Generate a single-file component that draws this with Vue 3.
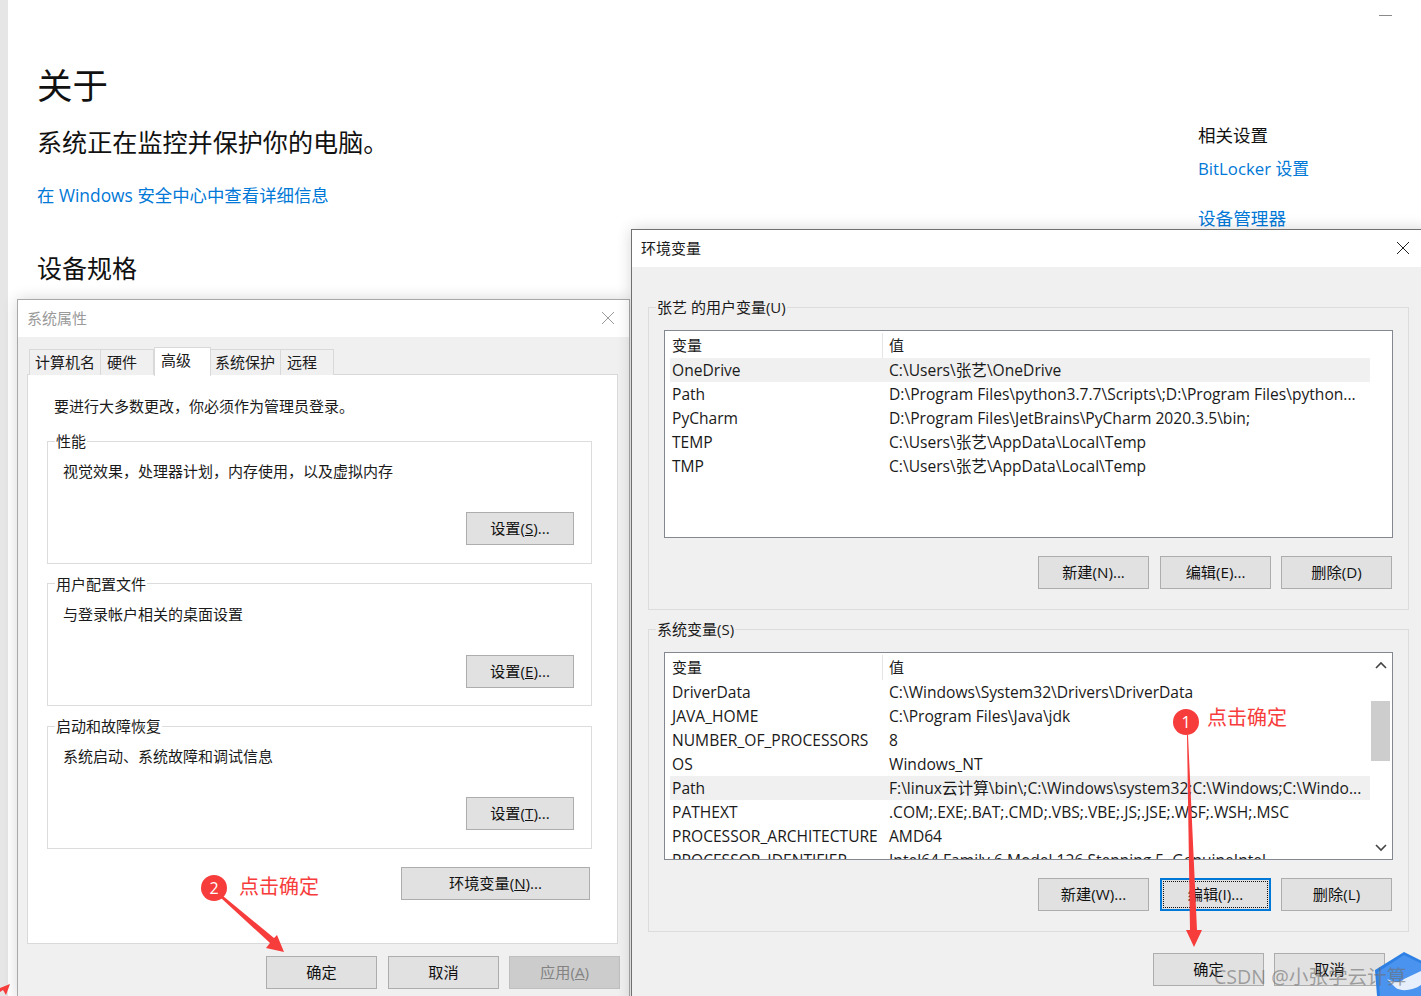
<template>
  <div class="desktop">
    <!-- settings page behind the dialogs -->
    <div class="settings">
      <div class="main-col">
        <h1>关于</h1>
        <h3>系统正在监控并保护你的电脑。</h3>
        <a class="link sec-link">在 Windows 安全中心中查看详细信息</a>
        <h2>设备规格</h2>
      </div>
      <div class="side-col">
        <div class="side-title">相关设置</div>
        <a class="link bit">BitLocker 设置</a>
        <a class="link device">设备管理器</a>
      </div>
      <div class="minimize"></div>
    </div>

    <!-- 系统属性 -->
    <div class="win sys-win">
      <div class="titlebar inactive">
        <span>系统属性</span>
        <svg class="close" width="14" height="14" viewBox="0 0 14 14"><path d="M1 1 13 13M13 1 1 13" stroke="#9a9a9a" stroke-width="1" fill="none" /></svg>
      </div>
      <div class="sys-body">
        <div class="tabs">
          <div v-for="t in tabs" :key="t.name" class="tab" :class="{ active: t.active }" :style="{ width: t.w + 'px' }">{{ t.name }}</div>
        </div>
        <div class="panel">
          <p class="notice">要进行大多数更改，你必须作为管理员登录。</p>
          <fieldset v-for="g in sysGroups" :key="g.title" class="sys-group">
            <legend>{{ g.title }}</legend>
            <div class="group-desc">{{ g.desc }}</div>
            <div class="btn-row">
              <button class="btn set-btn">设置(<u>{{ g.key }}</u>)...</button>
            </div>
          </fieldset>
          <div class="btn-row env-row">
            <button class="btn env-btn">环境变量(<u>N</u>)...</button>
          </div>
        </div>
        <div class="btn-row foot">
          <button class="btn">确定</button>
          <button class="btn">取消</button>
          <button class="btn disabled">应用(<u>A</u>)</button>
        </div>
      </div>
    </div>

    <!-- 环境变量 -->
    <div class="win env-win">
      <div class="titlebar">
        <span>环境变量</span>
        <svg class="close" width="14" height="14" viewBox="0 0 14 14"><path d="M1 1 13 13M13 1 1 13" stroke="#222" stroke-width="1" fill="none" /></svg>
      </div>
      <div class="env-body">
        <fieldset class="env-group">
          <legend>张艺 的用户变量(U)</legend>
          <div class="list">
            <div class="list-main">
              <div class="row head"><span class="c1">变量</span><span class="c2">值</span></div>
              <div v-for="r in userVars" :key="r[0]" class="row" :class="{ sel: r[0] === 'OneDrive' }">
                <span class="c1">{{ r[0] }}</span><span class="c2">{{ r[1] }}</span>
              </div>
            </div>
          </div>
          <div class="btn-row list-btns">
            <button class="btn">新建(N)...</button>
            <button class="btn">编辑(E)...</button>
            <button class="btn">删除(D)</button>
          </div>
        </fieldset>
        <fieldset class="env-group second">
          <legend>系统变量(S)</legend>
          <div class="list">
            <div class="list-main">
              <div class="row head"><span class="c1">变量</span><span class="c2">值</span></div>
              <div v-for="r in sysVars" :key="r[0]" class="row" :class="{ sel: r[0] === 'Path' }">
                <span class="c1">{{ r[0] }}</span><span class="c2">{{ r[1] }}</span>
              </div>
            </div>
            <div class="scrollbar">
              <svg width="12" height="8" viewBox="0 0 12 8"><path d="M1 7 6 2 11 7" stroke="#444" stroke-width="1.6" fill="none" /></svg>
              <div class="track"><div class="thumb"></div></div>
              <svg width="12" height="8" viewBox="0 0 12 8"><path d="M1 1 6 6 11 1" stroke="#444" stroke-width="1.6" fill="none" /></svg>
            </div>
          </div>
          <div class="btn-row list-btns">
            <button class="btn">新建(W)...</button>
            <button class="btn focus"><span>编辑(I)...</span></button>
            <button class="btn">删除(L)</button>
          </div>
        </fieldset>
        <div class="btn-row env-foot">
          <button class="btn">确定</button>
          <button class="btn">取消</button>
        </div>
      </div>
    </div>

    <!-- annotations drawn over the screenshot -->
    <svg class="marks" width="1421" height="996" viewBox="0 0 1421 996">
      <polygon points="0,988 10,984 6,995 3,990 0,992" fill="#f73c3c" />
      <polygon points="221,898 223,896 274,938 277,935 284,952 266,948 270,943" fill="#f73c3c" />
      <polygon points="1187,735 1188,735 1197,930 1202,930 1194,947 1186,930 1190,930" fill="#f73c3c" />
      <path d="M1404 952 1432 966V996H1377L1375 970Z" fill="#2f80e4" />
      <path d="M1404 955 1430 968V996H1380L1378 972Z" fill="#4a93ee" />
      <path d="M1387 979C1394 982 1399 984 1404 979L1421 971V985C1414 990 1402 992 1396 988Z" fill="#e6effb" />
    </svg>
    <div class="badge badge-1">1</div>
    <div class="note note-1">点击确定</div>
    <div class="badge badge-2">2</div>
    <div class="note note-2">点击确定</div>
    <div class="watermark">CSDN @小张学云计算</div>
  </div>
</template>

<script setup>
const tabs = [
  { name: "计算机名", w: 72 },
  { name: "硬件", w: 53 },
  { name: "高级", w: 57, active: true },
  { name: "系统保护", w: 70 },
  { name: "远程", w: 53 },
];

const sysGroups = [
  { title: "性能", desc: "视觉效果，处理器计划，内存使用，以及虚拟内存", key: "S" },
  { title: "用户配置文件", desc: "与登录帐户相关的桌面设置", key: "E" },
  { title: "启动和故障恢复", desc: "系统启动、系统故障和调试信息", key: "T" },
];

const userVars = [
  ["OneDrive", "C:\\Users\\张艺\\OneDrive"],
  ["Path", "D:\\Program Files\\python3.7.7\\Scripts\\;D:\\Program Files\\python..."],
  ["PyCharm", "D:\\Program Files\\JetBrains\\PyCharm 2020.3.5\\bin;"],
  ["TEMP", "C:\\Users\\张艺\\AppData\\Local\\Temp"],
  ["TMP", "C:\\Users\\张艺\\AppData\\Local\\Temp"],
];

const sysVars = [
  ["DriverData", "C:\\Windows\\System32\\Drivers\\DriverData"],
  ["JAVA_HOME", "C:\\Program Files\\Java\\jdk"],
  ["NUMBER_OF_PROCESSORS", "8"],
  ["OS", "Windows_NT"],
  ["Path", "F:\\linux云计算\\bin\\;C:\\Windows\\system32;C:\\Windows;C:\\Windo..."],
  ["PATHEXT", ".COM;.EXE;.BAT;.CMD;.VBS;.VBE;.JS;.JSE;.WSF;.WSH;.MSC"],
  ["PROCESSOR_ARCHITECTURE", "AMD64"],
  ["PROCESSOR_IDENTIFIER", "Intel64 Family 6 Model 126 Stepping 5, GenuineIntel"],
];
</script>

<style>
html, body { margin: 0; background: #fff; }
</style>

<style scoped>
.desktop {
  position: relative;
  width: 1421px;
  height: 996px;
  overflow: hidden;
  background: #fff;
  font-family: "Open Sans", "Noto Sans CJK SC", sans-serif;
  font-size: 15px;
  color: #1a1a1a;
}

/* ------ settings page ------ */
.settings {
  display: flex;
  height: 100%;
  box-sizing: border-box;
  padding-left: 29px;
  border-left: 8px solid #e6e6e6;
  color: #111;
}
.main-col { width: 1161px; }
h1 {
  margin: 61px 0 0;
  font-size: 35.5px;
  line-height: 48px;
  font-weight: 400;
}
h3 {
  margin: 15px 0 0;
  font-size: 25.1px;
  line-height: 36px;
  font-weight: 400;
}
h2 {
  margin: 42px 0 0;
  font-size: 25px;
  line-height: 36px;
  font-weight: 400;
}
.link {
  display: block;
  color: #0078d7;
  font-size: 17.4px;
  line-height: 26px;
}
.sec-link { margin-top: 22px; }
.bit { font-size: 16.8px; }
.side-col { padding-top: 122px; }
.side-title { font-size: 17.5px; line-height: 26px; margin-bottom: 8px; }
.device { margin-top: 23px; font-size: 17.6px; }
.minimize {
  position: absolute;
  top: 15px;
  left: 1379px;
  width: 13px;
  height: 1px;
  background: #8a8a8a;
}

/* ------ dialog windows ------ */
.win {
  position: absolute;
  box-sizing: border-box;
  background: #f0f0f0;
  display: flex;
  flex-direction: column;
  box-shadow: 0 0 14px rgba(0, 0, 0, 0.16);
}
.sys-win {
  left: 17px;
  top: 299px;
  width: 613px;
  height: 700px;
  border: 1px solid #a9a9a9;
}
.env-win {
  left: 631px;
  top: 229px;
  width: 800px;
  height: 780px;
  border: 1px solid #707070;
}
.titlebar {
  flex: none;
  box-sizing: border-box;
  height: 37px;
  background: #fff;
  display: flex;
  align-items: center;
  justify-content: space-between;
  padding: 0 14px 2px 9px;
}
.titlebar.inactive { color: #9a9a9a; }
.env-win .titlebar { padding-right: 20px; }

.btn {
  box-sizing: border-box;
  width: 111px;
  height: 33px;
  padding: 0 0 3px;
  border: 1px solid #adadad;
  background: #e1e1e1;
  color: #111;
  font: inherit;
  font-size: 15.2px;
}
.btn.disabled { background: #ccc; border-color: #bfbfbf; color: #838383; }
.btn.focus { border: 2px solid #0078d7; padding: 1px; }
.btn.focus span {
  display: block;
  height: 100%;
  line-height: 25px;
  box-sizing: border-box;
  border: 1px dotted #111;
}
.btn-row { display: flex; justify-content: flex-end; }

/* ------ system properties ------ */
.sys-body { flex: 1; padding: 11px 10px 0 9px; }
.tabs {
  display: flex;
  align-items: flex-end;
  height: 27px;
  padding-left: 2px;
  position: relative;
  z-index: 1;
  margin-bottom: -1px;
}
.tab {
  box-sizing: border-box;
  height: 26px;
  line-height: 25px;
  padding-left: 6px;
  background: #f0f0f0;
  border: 1px solid #d9d9d9;
  border-bottom: none;
  border-left: none;
  white-space: nowrap;
}
.tab:first-child { border-left: 1px solid #d9d9d9; padding-left: 5px; }
.tab:nth-child(4) { padding-left: 4px; }
.tab.active {
  height: 29px;
  line-height: 24px;
  padding-left: 6px;
  background: #fff;
  align-self: flex-end;
  border-left: 1px solid #d9d9d9;
  margin-bottom: -1px;
}
.panel {
  box-sizing: border-box;
  width: 591px;
  height: 570px;
  background: #fff;
  border: 1px solid #d9d9d9;
  padding: 19px 25px 0 19px;
}
.notice { margin: 0 0 13px 7px; line-height: 24px; }
fieldset { margin: 0; min-width: 0; }
.sys-group {
  box-sizing: border-box;
  height: 132.5px;
  margin: 0 0 10px;
  padding: 0 17px 17px 15px;
  border: 1px solid #dcdcdc;
  display: block;
}
.sys-group legend, .env-group legend {
  padding: 0 1px;
  margin-left: -8px;
  line-height: 20px;
}
.group-desc { line-height: 24px; margin-top: 8px; height: 40px; }
.set-btn { width: 108px; margin-top: 13px; }
.env-row { margin-top: 18px; margin-right: 2px; }
.env-btn { width: 189px; }
.foot { gap: 10px; margin-top: 12px; margin-right: -1px; }
.foot .btn:first-child { margin-right: 1px; }

/* ------ environment variables ------ */
.env-body { flex: 1; padding: 30px 0 0 16px; width: 761px; }
.env-group {
  box-sizing: border-box;
  width: 761px;
  height: 313px;
  padding: 13px 15px 0 15px;
  border: 1px solid #dcdcdc;
}
.env-group.second { margin-top: 9px; padding-top: 13px; }
.list {
  box-sizing: border-box;
  height: 208px;
  background: #fff;
  border: 1px solid #828790;
  display: flex;
  overflow: hidden;
}
.list-main { flex: 1; min-width: 0; padding: 2px 0 0 5px; overflow: hidden; font-size: 15.6px; }
.second .list { padding-right: 1px; }
.row {
  display: flex;
  height: 24px;
  line-height: 24px;
  white-space: nowrap;
  margin-right: 22px;
}
.row.head { height: 25px; font-size: 15px; }
.row.sel { background: #f0f0f0; }
.c1 { flex: none; width: 217px; padding-left: 2px; box-sizing: border-box; }
.c2 { padding-left: 2px; flex: none; }
.head .c1 { border-right: 1px solid #e5e5e5; width: 213px; }
.head .c2 { padding-left: 6px; }
.second .row { margin-right: 0; }
.list-btns { gap: 10px; margin-top: 18px; margin-right: 1px; }
.list-btns .btn:first-child { margin-right: 1px; }
.scrollbar {
  flex: none;
  width: 21px;
  display: flex;
  flex-direction: column;
  align-items: center;
  padding: 8px 0 7px;
  box-sizing: border-box;
}
.track { flex: 1; width: 100%; padding-top: 32px; }
.thumb { width: 19px; height: 60px; margin-left: 1px; background: #cdcdcd; }
.env-foot {
  justify-content: flex-start;
  gap: 10px;
  margin: 21px 0 0 505px;
}

/* ------ annotations ------ */
.marks { position: absolute; left: 0; top: 0; pointer-events: none; }
.badge {
  position: absolute;
  width: 26px;
  height: 26px;
  line-height: 26px;
  border-radius: 50%;
  background: #f73c3c;
  color: #fff;
  text-align: center;
  font-size: 16px;
}
.badge-1 { left: 1173px; top: 709px; }
.badge-2 { left: 201px; top: 875px; }
.note { position: absolute; color: #f73c3c; font-size: 20px; line-height: 28px; }
.note-1 { left: 1207px; top: 704px; }
.note-2 { left: 239px; top: 873px; }
.watermark {
  position: absolute;
  left: 1214px;
  top: 963px;
  font-size: 19.6px;
  line-height: 28px;
  color: rgba(110, 110, 110, 0.6);
  white-space: nowrap;
}
</style>
